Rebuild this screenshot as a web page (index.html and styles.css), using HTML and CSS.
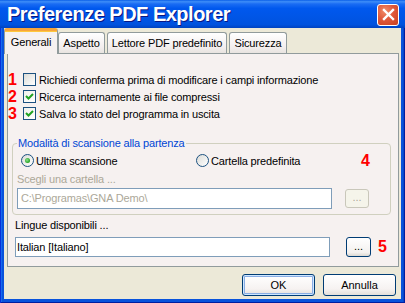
FILE: index.html
```html
<!DOCTYPE html>
<html lang="it">
<head>
    <meta charset="UTF-8">
    <meta name="viewport" content="width=device-width, initial-scale=1.0">
    <title>Preferenze PDF Explorer</title>
    <link rel="stylesheet" href="styles.css">
</head>
<body>
    <div class="window">
        <div class="titlebar">
            <span class="title">Preferenze PDF Explorer</span>
            <button class="close" aria-label="Chiudi">
                <svg width="13" height="13" viewBox="0 0 13 13">
                    <path d="M2 2 L11 11 M11 2 L2 11" stroke="#fff" stroke-width="2.4" stroke-linecap="square"/>
                </svg>
            </button>
        </div>

        <div class="client">
            <div class="tabs">
                <div class="tab active tab-generali">Generali</div>
                <div class="tab tab-aspetto">Aspetto</div>
                <div class="tab tab-lettore">Lettore PDF predefinito</div>
                <div class="tab tab-sicurezza">Sicurezza</div>
            </div>

            <div class="panel">
                <div class="options">
                    <label class="option">
                        <span class="marker">1</span>
                        <span class="checkbox"></span>
                        Richiedi conferma prima di modificare i campi informazione
                    </label>
                    <label class="option">
                        <span class="marker">2</span>
                        <span class="checkbox checked">
                            <svg width="9" height="9" viewBox="0 0 9 9"><path d="M1 4 L3.5 6.5 L8 2" fill="none" stroke="#21a121" stroke-width="2"/></svg>
                        </span>
                        Ricerca internamente ai file compressi
                    </label>
                    <label class="option">
                        <span class="marker">3</span>
                        <span class="checkbox checked">
                            <svg width="9" height="9" viewBox="0 0 9 9"><path d="M1 4 L3.5 6.5 L8 2" fill="none" stroke="#21a121" stroke-width="2"/></svg>
                        </span>
                        Salva lo stato del programma in uscita
                    </label>
                </div>

                <fieldset class="group">
                    <legend>Modalità di scansione alla partenza</legend>
                    <div class="radios">
                        <label class="radio-item first">
                            <span class="radio checked"></span>
                            Ultima scansione
                        </label>
                        <label class="radio-item">
                            <span class="radio"></span>
                            Cartella predefinita
                        </label>
                        <span class="marker marker-4">4</span>
                    </div>
                    <div class="caption disabled">Scegli una cartella ...</div>
                    <div class="field-row">
                        <div class="textbox disabled">C:\Programas\GNA Demo\</div>
                        <button class="browse" disabled>...</button>
                    </div>
                </fieldset>

                <div class="caption language">Lingue disponibili ...</div>
                <div class="field-row language-row">
                    <div class="textbox">Italian [Italiano]</div>
                    <button class="browse">...</button>
                    <span class="marker marker-5">5</span>
                </div>
            </div>

            <div class="footer">
                <button class="btn default">OK</button>
                <button class="btn">Annulla</button>
            </div>
        </div>
    </div>
</body>
</html>
```

FILE: styles.css
```css
* {
    box-sizing: border-box;
}

body {
    margin: 0;
    padding: 0;
    width: 405px;
    height: 303px;
    overflow: hidden;
    font-family: "Liberation Sans", Arial, sans-serif;
    font-size: 11px;
    letter-spacing: -0.15px;
    color: #000;
    background: #0a4fd9;
}

.window {
    width: 405px;
    height: 303px;
    display: flex;
    flex-direction: column;
    background: #0853dc;
    padding: 0 4px 4px 4px;
    box-shadow: inset 1px 0 #0831d9, inset -1px 0 #001ea0, inset 0 -1px #001ea0, inset 2px 0 #166aee, inset -2px 0 #0846c8;
}

/* title bar */
.titlebar {
    height: 28px;
    margin: 0 -4px;
    padding: 0 6px 0 7px;
    display: flex;
    align-items: center;
    justify-content: space-between;
    background: linear-gradient(#0a5fe8 0%, #3d8df8 6%, #1a6cf3 14%, #0058ee 30%, #0055e5 65%, #0052de 88%, #0043c0 100%);
}

.title {
    color: #fff;
    font-family: "Liberation Sans", Arial, sans-serif;
    font-weight: bold;
    font-size: 20px;
    letter-spacing: -0.5px;
    text-shadow: 1px 1px 0 #0a1883;
    margin-top: 1px;
}

.close {
    width: 22px;
    height: 22px;
    padding: 0;
    border: 1px solid #fff;
    border-radius: 3px;
    background: radial-gradient(circle at 35% 30%, #f08d6a 0%, #e0593b 45%, #c8401f 100%);
    display: flex;
    align-items: center;
    justify-content: center;
    margin-top: 1px;
}

/* client area */
.client {
    flex: 1;
    display: flex;
    flex-direction: column;
    background: #ece9d8;
}

.tabs {
    height: 25px;
    display: flex;
    align-items: flex-end;
}

.tab {
    height: 21px;
    line-height: 20px;
    text-align: center;
    border: 1px solid #919b9c;
    border-bottom: none;
    border-radius: 3px 3px 0 0;
    background: linear-gradient(#ffffff, #f3eeee 70%, #e8e4e0);
}

.tab.active {
    height: 26px;
    margin-bottom: -1px;
    position: relative;
    line-height: 22px;
    background: #f6f1f0;
    border-top: 3px solid #f7a53c;
    box-shadow: inset 0 1px 0 #ffc83c;
    padding-bottom: 4px;
}

.tab-generali { width: 54px; }
.tab-aspetto { width: 47px; }
.tab-lettore { width: 120px; margin-left: 2px; }
.tab-sicurezza { width: 58px; margin-left: 2px; }

.panel {
    height: 214px;
    margin: 0 2px 0 3px;
    border: 1px solid #919b9c;
    background: #f6f1f0;
    padding-top: 17px;
}

/* check options */
.option {
    height: 17px;
    display: flex;
    align-items: center;
}

.marker {
    color: #ff0000;
    font-weight: bold;
    font-size: 16px;
    letter-spacing: 0;
    font-family: "Liberation Sans", Arial, sans-serif;
}

.option .marker {
    width: 15px;
    padding-left: 0;
}

.checkbox {
    width: 13px;
    height: 13px;
    margin-right: 3px;
    border: 1px solid #1c5180;
    background: linear-gradient(135deg, #dcdcd7, #ffffff);
    display: flex;
    align-items: center;
    justify-content: center;
}

.checkbox.checked {
    background: linear-gradient(135deg, #f0f0ea, #ffffff);
}

/* group box */
.group {
    margin: 15px 7px 0 4px;
    padding: 4px 4px 5px 4px;
    border: 1px solid #d0d0bf;
    border-radius: 4px;
}

.group legend {
    padding: 0 1px;
    color: #0046d5;
    line-height: 13px;
}

.radios {
    height: 13px;
    display: flex;
    align-items: center;
    padding-left: 4px;
}

.radio-item {
    display: flex;
    align-items: center;
}

.radio-item.first {
    width: 175px;
}

.radio {
    width: 13px;
    height: 13px;
    margin-right: 2px;
    border-radius: 50%;
    border: 1px solid #1c5180;
    background: linear-gradient(135deg, #dcdcd7, #ffffff);
    display: flex;
    align-items: center;
    justify-content: center;
}

.radio.checked::after {
    content: "";
    width: 5px;
    height: 5px;
    border-radius: 50%;
    background: radial-gradient(circle at 40% 40%, #8fe38f, #21a121 70%);
}

.marker-4 {
    margin-left: auto;
    margin-right: 16px;
}

.caption {
    line-height: 13px;
    margin-top: 6px;
}

.caption.disabled {
    color: #aca899;
}

.field-row {
    display: flex;
    align-items: center;
    margin-top: 2px;
}

.textbox {
    width: 315px;
    height: 21px;
    padding: 0 3px;
    line-height: 19px;
    background: #fff;
    border: 1px solid #7f9db9;
}

.textbox.disabled {
    color: #aca899;
}

.browse {
    width: 25px;
    height: 20px;
    margin-left: 15px;
    padding: 0 0 3px;
    font-family: inherit;
    font-size: 11px;
    color: #000;
    border: 1px solid #003c74;
    border-radius: 3px;
    background: linear-gradient(#ffffff, #f4f1ef 80%, #dcd8d2);
}

.browse:disabled {
    width: 24px;
    height: 19px;
    margin-left: 13px;
    color: #aca899;
    border-color: #c9c7ba;
    background: #f5f4ea;
}

.caption.language {
    margin: 4px 0 0 7px;
}

.language-row {
    margin: 5px 0 0 7px;
}

.language-row .textbox {
    height: 20px;
    line-height: 18px;
    padding-left: 1px;
}

.language-row .browse {
    margin-left: 16px;
}

.marker-5 {
    margin-left: 7px;
}

/* footer buttons */
.footer {
    flex: 1;
    display: flex;
    justify-content: flex-end;
    gap: 8px;
    padding: 7px 5px 0 0;
}

.btn {
    width: 73px;
    height: 22px;
    font-family: inherit;
    font-size: 11px;
    color: #000;
    border: 1px solid #003c74;
    border-radius: 3px;
    background: linear-gradient(#ffffff, #f6f2f1 70%, #e4dfda);
}

.btn.default {
    box-shadow: inset 0 0 0 1px #cee7ff, inset 0 0 0 2px #89ade4;
}
```
